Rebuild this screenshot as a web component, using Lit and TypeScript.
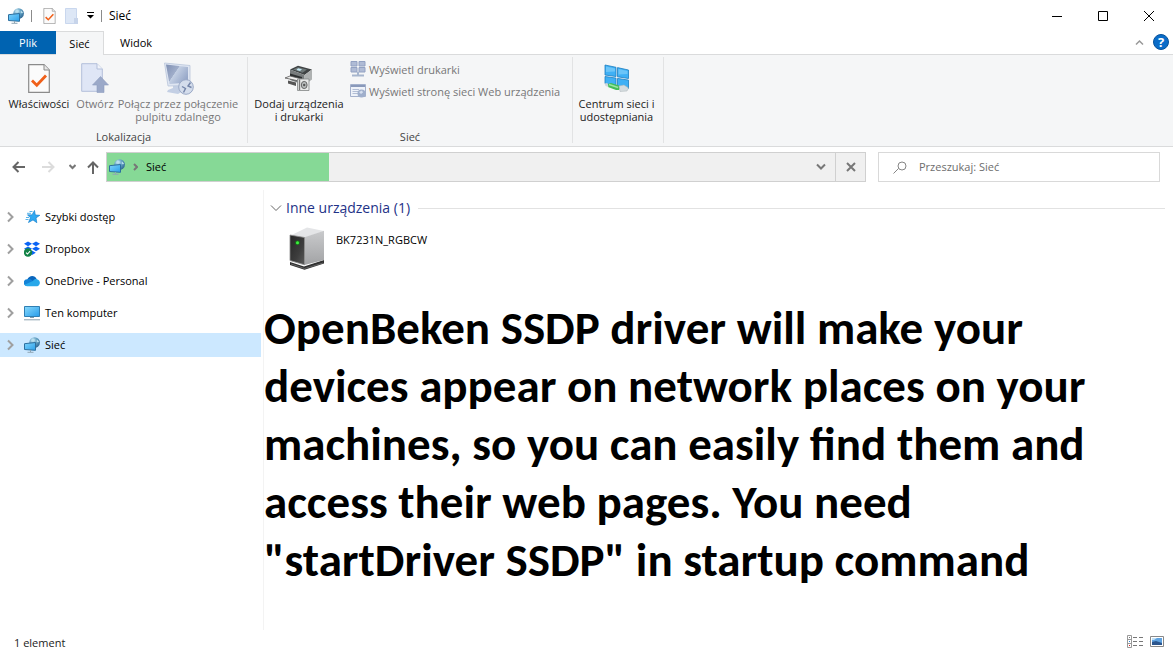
import { LitElement, html, svg, css } from "lit";
import { customElement, state } from "lit/decorators.js";

const networkIcon = html`<svg width="16" height="16" viewBox="0 0 16 16" aria-hidden="true">
  <defs>
    <linearGradient id="scr" x1="0" y1="0" x2="1" y2="1"><stop offset="0" stop-color="#7fd3fb"/><stop offset="1" stop-color="#2ba0ea"/></linearGradient>
    <radialGradient id="globe" cx=".35" cy=".3" r=".8"><stop offset="0" stop-color="#c4e4f2"/><stop offset=".5" stop-color="#5c9cc0"/><stop offset="1" stop-color="#285f8c"/></radialGradient>
  </defs>
  <circle cx="10.6" cy="5.6" r="5.3" fill="url(#globe)"/>
  <path d="M8 1.400l2 .4 1 1.400-1.600 1.400-2.300-.4zM13 2.400l2 2-1 1-1.400-.8z" fill="#b9dfee"/>
  <path d="M.5 6.700l11-1.200v7.800l-11-.8z" fill="url(#scr)" stroke="#2c6f9f"/>
  <path d="M6.500 13v2M3.500 15.300h6" stroke="#8fa5b5" fill="none"/>
</svg>`;

const docIcon = (w: number, h: number) => html`<svg width=${w} height=${h} viewBox="0 0 22 29" aria-hidden="true">
  <path d="M.7.7h15.300l5.300 5.300v22.300H.7z" fill="#fbfbfb" stroke="#8b8b8b" stroke-width="1.200"/>
  <path d="M16 .7V6h5.300" fill="#e8e8e8" stroke="#8b8b8b"/>
  <path d="M4 16.500l4.800 4.800L18 11.500" fill="none" stroke="#f0601a" stroke-width="2.800"/>
</svg>`;

const openIcon = html`<svg width="28" height="30" viewBox="0 0 28 30" aria-hidden="true">
  <path d="M.7.7h15.300l5.300 5.300v22.300H.7z" fill="#dfe6f6" stroke="#b3bfda"/>
  <path d="M16 .7V6h5.300" fill="#f1f4fb" stroke="#b3bfda"/>
  <path d="M19.500 13.500L27.500 22h-4.500v7.500h-7V22h-4.500z" fill="#9ba9c9" stroke="#8f9dbf" stroke-width=".6"/>
</svg>`;

const openSmallIcon = html`<svg width="13" height="16" viewBox="0 0 13 16" aria-hidden="true">
  <path d="M.5.5h11v15H.5z" fill="#dde7f6" stroke="#c9d7ee"/>
  <path d="M9 10h4v6H9z" fill="#c7d4ea"/>
</svg>`;

const remoteIcon = html`<svg width="32" height="33" viewBox="0 0 32 33" aria-hidden="true">
  <defs><linearGradient id="rd" x1="0" y1="0" x2="1" y2=".6"><stop offset="0" stop-color="#7f8fb3"/><stop offset=".48" stop-color="#a0aeca"/><stop offset=".5" stop-color="#c3cfe3"/><stop offset="1" stop-color="#97a8c9"/></linearGradient></defs>
  <path d="M11 22h7v5l3 2-5 3-11-2 1-2 5-2z" fill="#c3cfe4"/>
  <path d="M2.500 1L28 3.500v20L6 24z" fill="#dfe6f2" stroke="#b9c5db" stroke-width=".8"/>
  <path d="M4 2.500l22 2.500v15.500L7.500 22z" fill="url(#rd)"/>
  <circle cx="24" cy="25" r="7.300" fill="#d4ddec" stroke="#9aa9c6"/>
  <path d="M20 24.500l3.500 2-2 4M28.500 20.500L26 24l3.500 1.500" fill="none" stroke="#7485a9" stroke-width="1.400"/>
</svg>`;

const printerIcon = html`<svg width="30" height="26" viewBox="0 0 30 26" aria-hidden="true">
  <path d="M6 4.500L14 .8l14 3.700L20.500 10z" fill="#3f4344"/>
  <path d="M9 4.500l5-2.200 9 2.200-4.500 3.200z" fill="#6d7677"/>
  <path d="M14 3.300l4 1-2 1.800-3.500-1z" fill="#c3e6f1"/>
  <path d="M6 4.500L20.500 10v10L6 15z" fill="#777b7c"/>
  <path d="M20.500 10L28 4.500v10L20.500 20z" fill="#aeb1b1"/>
  <path d="M6 8.500l12 3.500v3L6 11z" fill="#2c2f30"/>
  <path d="M1 13l5-2 12 3-3 2z" fill="#f0f0ef" stroke="#555" stroke-width=".8"/>
  <path d="M4 15.500l8 2v3.500l-8-2.500z" fill="#555"/>
  <path d="M13.500 14h11.500v11.500H13.500z" fill="#e9eae9" stroke="#828585" stroke-width=".8"/>
  <path d="M15.500 14.500v10.500" stroke="#777" stroke-width="1.400"/><ellipse cx="20.200" cy="20" rx="2.900" ry="3.600" fill="#b8bcbc" stroke="#666"/><circle cx="20.200" cy="20" r="1.200" fill="#555"/>
</svg>`;

const gridPrintersIcon = html`<svg width="16" height="16" viewBox="0 0 16 16" aria-hidden="true">
  <path d="M1 .5h6v4.500H1zM9 .5h6v4.500H9zM1 6.500h6V11H1zM9 6.500h6V11H9z" fill="#afbbd5" stroke="#92a1c2"/>
  <path d="M8 11v3M2 14.500h12" stroke="#a7b6ce" stroke-width="2"/>
</svg>`;

const webPageIcon = html`<svg width="16" height="14" viewBox="0 0 16 14" aria-hidden="true">
  <path d="M.5.5h15v12H.5z" fill="#eef2f9" stroke="#a4b1cc"/><path d="M1 2h14" stroke="#8999ba" stroke-width="2"/>
  <path d="M2.500 5.500H9M2.500 7.500H8M2.500 9.500H8" stroke="#b2bed5"/>
  <circle cx="11.500" cy="9.500" r="4" fill="#9fafcc"/><path d="M9 8l3-1.500 1 2-2 1.500z" fill="#d5dfef"/>
</svg>`;

const centerIcon = html`<svg width="26" height="28" viewBox="0 0 26 28" aria-hidden="true">
  <path d="M1 1l11 2.300v9.200L1 11zM13.500 3.600L24.500 6v8.500l-11-1.700zM1 12.500l11 1.600v8L1 19.500zM13.500 14.400l11 1.700v8.400l-11-2z" fill="#3fb0f5" stroke="#1d7fc0" stroke-width=".8"/>
  <path d="M2 2.500l9 2v3L2 8zM14.500 5l9 2v3l-9 .5z" fill="#6cc5f8"/>
  <path d="M4 20l3-1 8 2.500 1.500 2-1.500 2.500h-3l-8-3z" fill="#42bd58"/><path d="M5 20.500l9 3" stroke="#9ae4a2" stroke-width="1.500"/>
  <path d="M15 22l5-1 4.500 3-1.500 3-7 .5z" fill="#d5dcdf" stroke="#aab4b9" stroke-width=".5"/><path d="M.5 19.500l3-.5 1 4-3-1z" fill="#cfd7dc"/>
</svg>`;

const starIcon = html`<svg width="16" height="16" viewBox="0 0 16 16" aria-hidden="true">
  <path d="M10.500 1.500l.8 4.500 4.500.300-3.800 2.600.8 4.800-3.800-2.800-4.500 2.600 2-4.700L3.500 5.800l4.500.1z" fill="#2fa9f2" stroke="#1681cf" stroke-width=".7"/>
  <path d="M5.500 2.500h3M3 4.300h4M2 8.500h3M1.500 10.500h3" stroke="#58b4ea"/>
</svg>`;

const dropboxIcon = html`<svg width="16" height="16" viewBox="0 0 16 16" aria-hidden="true">
  <path d="M4 .5l4 2.300L4 5.200 0 2.800zM12 .5l4 2.300-4 2.400-4-2.400zM4 5.500l4 2.300-4 2.400-4-2.400zM12 5.500l4 2.300-4 2.400-4-2.400zM8 9.500l3.800 2.300L8 14.100l-3.800-2.300z" fill="#0a63f5"/>
  <circle cx="4" cy="11.500" r="4.200" fill="#128246"/><path d="M2 11.600l1.500 1.400 2.600-2.800" fill="none" stroke="#fff" stroke-width="1.100"/>
</svg>`;

const cloudIcon = html`<svg width="16" height="16" viewBox="0 0 16 16" aria-hidden="true">
  <path d="M3.300 6.500C5 2.200 10.800 1.500 12.700 6.200L9 10z" fill="#0a66bd"/>
  <path d="M3 13a3.300 3.300 0 0 1 .3-6.700C5 5.500 7 6 8.500 7.500l3 3L7 13z" fill="#1383d7"/>
  <path d="M3 13.200c-1-.1-1.900-.6-2.400-1.500L9 8c1-1.800 3-2.300 4.500-1.600 3 .8 3.400 5.700-.2 6.800z" fill="#28a8ea"/>
</svg>`;

const computerIcon = html`<svg width="16" height="16" viewBox="0 0 16 16" aria-hidden="true">
  <defs><linearGradient id="pc" x1="0" y1="0" x2="1" y2="1"><stop offset="0" stop-color="#8adafc"/><stop offset="1" stop-color="#259ceb"/></linearGradient></defs>
  <path d="M.5 1.500h15v10H.5z" fill="url(#pc)" stroke="#2f7fb3"/>
  <path d="M6 12.500h4" stroke="#7d9aac"/><path d="M0 14.800h16" stroke="#8ba0ae"/>
</svg>`;

const serverIcon = html`<svg width="38" height="45" viewBox="0 0 38 45" aria-hidden="true">
  <defs>
    <linearGradient id="front" x1="0" y1="0" x2="1" y2="1"><stop offset="0" stop-color="#262626"/><stop offset=".6" stop-color="#3d3d3d"/><stop offset="1" stop-color="#5a5a5a"/></linearGradient>
    <linearGradient id="side" x1="0" y1="0" x2="0" y2="1"><stop offset="0" stop-color="#c9cacc"/><stop offset="1" stop-color="#a2a3a5"/></linearGradient>
  </defs>
  <path d="M1 36l14 4.500L35 34v3.500L15.500 43.800 1 39z" fill="#303030"/>
  <path d="M2 38l13.500 4.500L34 37" stroke="#777" fill="none" stroke-width=".7"/>
  <path d="M1.500 9.500L18 1.500l17 3.500L16 11.500z" fill="#e4e5e7"/>
  <path d="M15.500 11.200L35 4.800V34L15.500 39z" fill="url(#side)"/>
  <path d="M1 9l14.500 2.500v27.300L1 34.500z" fill="url(#front)" stroke="#8b8b8b" stroke-width=".8"/>
  <circle cx="8.500" cy="16.800" r="2.300" fill="#147a17"/><circle cx="8.500" cy="16.800" r="1.500" fill="#3ff03f"/>
</svg>`;

const stroke = (d: string, w: number, h: number, color: string, sw = 1) => html`<svg
  width=${w} height=${h} viewBox="0 0 ${w} ${h}" fill="none" stroke=${color} stroke-width=${sw} aria-hidden="true">${svg`<path d=${d}/>`}</svg>`;

@customElement("app-root")
export class AppRoot extends LitElement {
  @state() private selected = "Sieć";

  static styles = css`
    :host {
      display: flex;
      flex-direction: column;
      min-height: 100vh;
      background: #fff;
      color: #000;
      font: 11px/16px "Open Sans", "Noto Sans", sans-serif;
    }
    * { box-sizing: border-box; }
    svg { display: block; flex: none; }
    button {
      margin: 0; padding: 0; border: 0; background: none;
      font: inherit; color: inherit;
      display: flex; align-items: center; justify-content: center;
    }
    button:disabled { color: #777; }
    .titlebar { display: flex; align-items: center; height: 31px; padding: 0 1px 0 8px; }
    .quick { display: flex; align-items: center; gap: 7px; }
    .quick .sep { width: 1px; height: 12px; background: #8b8b8b; }
    .quick .tools { display: flex; align-items: center; gap: 9px; padding-left: 4px; }
    .title { font: inherit; font-size: 12px; margin: 0; }
    .winctl { margin-left: auto; display: flex; align-self: stretch; }
    .winctl button { width: 46px; }
    .tabs { display: flex; height: 24px; border-bottom: 1px solid #dadbdc; }
    .tab { height: 24px; }
    .tab.file { width: 56px; height: 23px; background: #0063b1; color: #fff; }
    .tab.active { width: 48px; background: #f5f6f7; border: 1px solid #dadbdc; border-width: 1px 1px 0 0; }
    .tab.view { width: 64px; height: 23px; }
    .tabend { margin-left: auto; display: flex; align-items: center; gap: 9px; padding: 0 4px 1px 0; }
    .help { width: 16px; height: 16px; border-radius: 50%; background: #0a6cc8; border: 1px solid #07529b; color: #fff; font-weight: 700; font-size: 13px; line-height: 14px; }
    .ribbon { display: flex; height: 92px; background: #f5f6f7; border-bottom: 1px solid #dadbdc; padding: 2px 0 3px; line-height: 13px; }
    .group { display: flex; flex-direction: column; justify-content: space-between; border-right: 1px solid #e2e3e4; color: #222; }
    .group h2 { margin: 0; font: inherit; text-align: center; color: #444; padding-right: 4px; }
    .row { display: flex; align-items: flex-start; }
    .big { flex-direction: column; justify-content: flex-start; text-align: center; }
    .big .pic { height: 40px; padding-top: 2px; display: flex; align-items: center; justify-content: center; }
    .g1 { width: 248px; padding-left: 4px; }
    .g2 { width: 325px; padding-left: 4px; }
    .g3 { width: 91px; }
    .props { width: 70px; }
    .open { width: 42px; }
    .remote { width: 124px; }
    .add { width: 94px; }
    .center { width: 87px; }
    .small { display: flex; flex-direction: column; gap: 6px; padding: 4px 0 0 4px; }
    .small button { gap: 3px; justify-content: flex-start; height: 16px; white-space: nowrap; }
    .nav { display: flex; align-items: center; padding: 5px 13px 0 9px; height: 35px; }
    .arrows { display: flex; align-items: center; width: 97px; }
    .arrows button { height: 28px; width: 20px; }
    .arrows .fwd { width: 40px; }
    .arrows .hist { width: 7px; }
    .arrows .up { width: 30px; margin-left: auto; justify-content: flex-end; padding-right: 7px; }
    .address { flex: 1; display: flex; height: 30px; border: 1px solid #d0d0d0; background: #f0f0f0; }
    .crumbs { flex: 1; display: flex; position: relative; }
    .crumbs progress { flex: 1; height: 28px; border: 0; appearance: none; background: none; }
    .crumbs progress::-webkit-progress-bar { background: none; }
    .crumbs progress::-webkit-progress-value { background: #86d996; }
    .path { position: absolute; inset: 0; display: flex; align-items: center; gap: 8px; padding-left: 2px; }
    .address .drop { width: 28px; }
    .address .stop { width: 30px; border-left: 1px solid #d0d0d0; }
    .search { margin-left: 12px; width: 282px; height: 30px; border: 1px solid #d9d9d9; display: flex; align-items: center; gap: 12px; padding-left: 14px; }
    .search input { border: 0; outline: 0; padding: 0; font: inherit; flex: 1; min-width: 0; background: none; }
    .search input::placeholder { color: #6d6d6d; opacity: 1; }
    .body { flex: 1; display: grid; grid-template-columns: 264px 1fr; padding-top: 8px; }
    .tree { border-right: 1px solid #f3f3f3; padding: 15px 2px 0 0; display: flex; flex-direction: column; gap: 8px; }
    .node { height: 24px; width: 100%; justify-content: flex-start; padding-left: 6px; }
    .node.sel { background: #cce8ff; }
    .node svg + svg { margin: 0 5px 0 7px; }
    .heading { display: flex; align-items: center; gap: 8px; padding: 8px 8px 0 6px; }
    .heading h2 { margin: 0; font-size: 14px; line-height: 20px; font-weight: 400; color: #1e3287; display: flex; align-items: center; gap: 4px; white-space: nowrap; }
    .heading hr { flex: 1; margin: 0; border: 0; border-top: 1px solid #e2e2e2; }
    .device { display: flex; gap: 9px; padding: 8px 0 0 25px; }
    .device span { padding-top: 6px; }
    .note { margin: 28px 0 0; font: 700 47px/58px Carlito, Calibri, Lato, sans-serif; white-space: nowrap; }
    .status { display: flex; align-items: center; justify-content: space-between; height: 24px; padding: 1px 9px 0 14px; color: #222; }
    .views { display: flex; align-items: center; gap: 7px; padding-bottom: 2px; }
  `;

  private node(label: string, icon: unknown) {
    return html`<button class="node ${this.selected === label ? "sel" : ""}" @click=${() => (this.selected = label)}>
      ${stroke("M2 1.500L6.500 6 2 10.500", 11, 12, "#9f9f9f", 2)}${icon}<span>${label}</span></button>`;
  }

  render() {
    return html`
      <header class="titlebar">
        <div class="quick">
          ${networkIcon}<span class="sep"></span>
          <div class="tools">
            <button aria-label="Właściwości">${docIcon(13, 16)}</button>
            <button aria-label="Otwórz">${openSmallIcon}</button>
            <button aria-label="Dostosuj pasek"><svg width="7" height="7" viewBox="0 0 7 7"><path d="M0 0h7v1H0zM0 3h7L3.500 6.500z"/></svg></button>
          </div>
          <span class="sep"></span><h1 class="title">Sieć</h1>
        </div>
        <div class="winctl">
          <button aria-label="Minimalizuj">${stroke("M0 5.500h10", 10, 10, "#000")}</button>
          <button aria-label="Maksymalizuj">${stroke("M.5.5h9v9h-9z", 10, 10, "#000")}</button>
          <button aria-label="Zamknij">${stroke("M0 0l10 10M10 0L0 10", 10, 10, "#000")}</button>
        </div>
      </header>
      <nav class="tabs">
        <button class="tab file">Plik</button><button class="tab active">Sieć</button><button class="tab view">Widok</button>
        <div class="tabend"><button aria-label="Zwiń wstążkę">${stroke("M1 5.500L4.500 2 8 5.500", 9, 7, "#999", 1.5)}</button><button class="help" aria-label="Pomoc">?</button></div>
      </nav>
      <section class="ribbon">
        <div class="group g1">
          <div class="row">
            <button class="big props"><span class="pic">${docIcon(22, 29)}</span>Właściwości</button>
            <button class="big open" disabled><span class="pic">${openIcon}</span>Otwórz</button>
            <button class="big remote" disabled><span class="pic">${remoteIcon}</span><span>Połącz przez połączenie<br>pulpitu zdalnego</span></button>
          </div>
          <h2>Lokalizacja</h2>
        </div>
        <div class="group g2">
          <div class="row">
            <button class="big add"><span class="pic">${printerIcon}</span><span>Dodaj urządzenia<br>i drukarki</span></button>
            <div class="small">
              <button disabled>${gridPrintersIcon}Wyświetl drukarki</button>
              <button disabled>${webPageIcon}Wyświetl stronę sieci Web urządzenia</button>
            </div>
          </div>
          <h2>Sieć</h2>
        </div>
        <div class="group g3">
          <div class="row"><button class="big center"><span class="pic">${centerIcon}</span><span>Centrum sieci i<br>udostępniania</span></button></div>
        </div>
      </section>
      <div class="nav">
        <div class="arrows">
          <button aria-label="Wstecz">${stroke("M13 6H2M6.500 1L1.500 6l5 5", 14, 12, "#666", 2)}</button>
          <button class="fwd" aria-label="Dalej" disabled>${stroke("M0 6h11M6.500 1l5 5-5 5", 14, 12, "#dcdcdc", 2)}</button>
          <button class="hist" aria-label="Ostatnie lokalizacje">${stroke("M.5 1l3 3 3-3", 7, 6, "#777", 2)}</button>
          <button class="up" aria-label="W górę">${stroke("M6 13V2M1 6.500l5-5 5 5", 12, 13, "#666", 2)}</button>
        </div>
        <div class="address">
          <div class="crumbs">
            <progress max="100" value="31.7" aria-label="Postęp"></progress>
            <div class="path">${networkIcon}${stroke("M1 1l3 3-3 3", 5, 8, "#777", 2)}<span>Sieć</span></div>
          </div>
          <button class="drop" aria-label="Rozwiń">${stroke("M1 1.500l4 4 4-4", 10, 8, "#777", 2)}</button>
          <button class="stop" aria-label="Zatrzymaj">${stroke("M1 1l8 8M9 1L1 9", 10, 10, "#777", 2)}</button>
        </div>
        <label class="search">
          ${stroke("M5.500 7.500L.5 12.500M5 5a4 4 0 1 0 8 0a4 4 0 1 0-8 0", 14, 13, "#858585")}
          <input type="text" placeholder="Przeszukaj: Sieć" aria-label="Przeszukaj: Sieć">
        </label>
      </div>
      <div class="body">
        <nav class="tree">
          ${this.node("Szybki dostęp", starIcon)}
          ${this.node("Dropbox", dropboxIcon)}
          ${this.node("OneDrive - Personal", cloudIcon)}
          ${this.node("Ten komputer", computerIcon)}
          ${this.node("Sieć", networkIcon)}
        </nav>
        <main>
          <div class="heading"><h2>${stroke("M1 1.500l5 5 5-5", 12, 8, "#666")}Inne urządzenia (1)</h2><hr></div>
          <div class="device">${serverIcon}<span>BK7231N_RGBCW</span></div>
          <p class="note">OpenBeken SSDP driver will make your<br>devices appear on network places on your<br>machines, so you can easily find them and<br>access their web pages. You need<br>"startDriver SSDP" in startup command</p>
        </main>
      </div>
      <footer class="status">
        <span>1 element</span>
        <div class="views">
          <button aria-label="Szczegóły"><svg width="16" height="13" viewBox="0 0 16 13"><path d="M.5.5h4v12h-4zM.5 4.500h4M.5 8.500h4" fill="#fff" stroke="#999"/><path d="M2 2h1v1H2z" fill="#777"/><path d="M2 6h1v1H2z" fill="#2a84e0"/><path d="M2 10h1v1H2z" fill="#d22"/><path d="M6 2.500h4M12 2.500h4M6 6.500h4M12 6.500h4M6 10.500h4M12 10.500h4" stroke="#777"/></svg></button>
          <button aria-label="Duże ikony"><svg width="14" height="11" viewBox="0 0 14 11"><path d="M.5.5h13v10H.5z" fill="#fff" stroke="#888"/><path d="M2 2h10v7H2z" fill="#5ea2e0"/><path d="M2 6l4-1 6 2v2H2z" fill="#2c568e"/><path d="M2 2h5l-3 2H2z" fill="#bfe0f7"/></svg></button>
        </div>
      </footer>
    `;
  }
}
